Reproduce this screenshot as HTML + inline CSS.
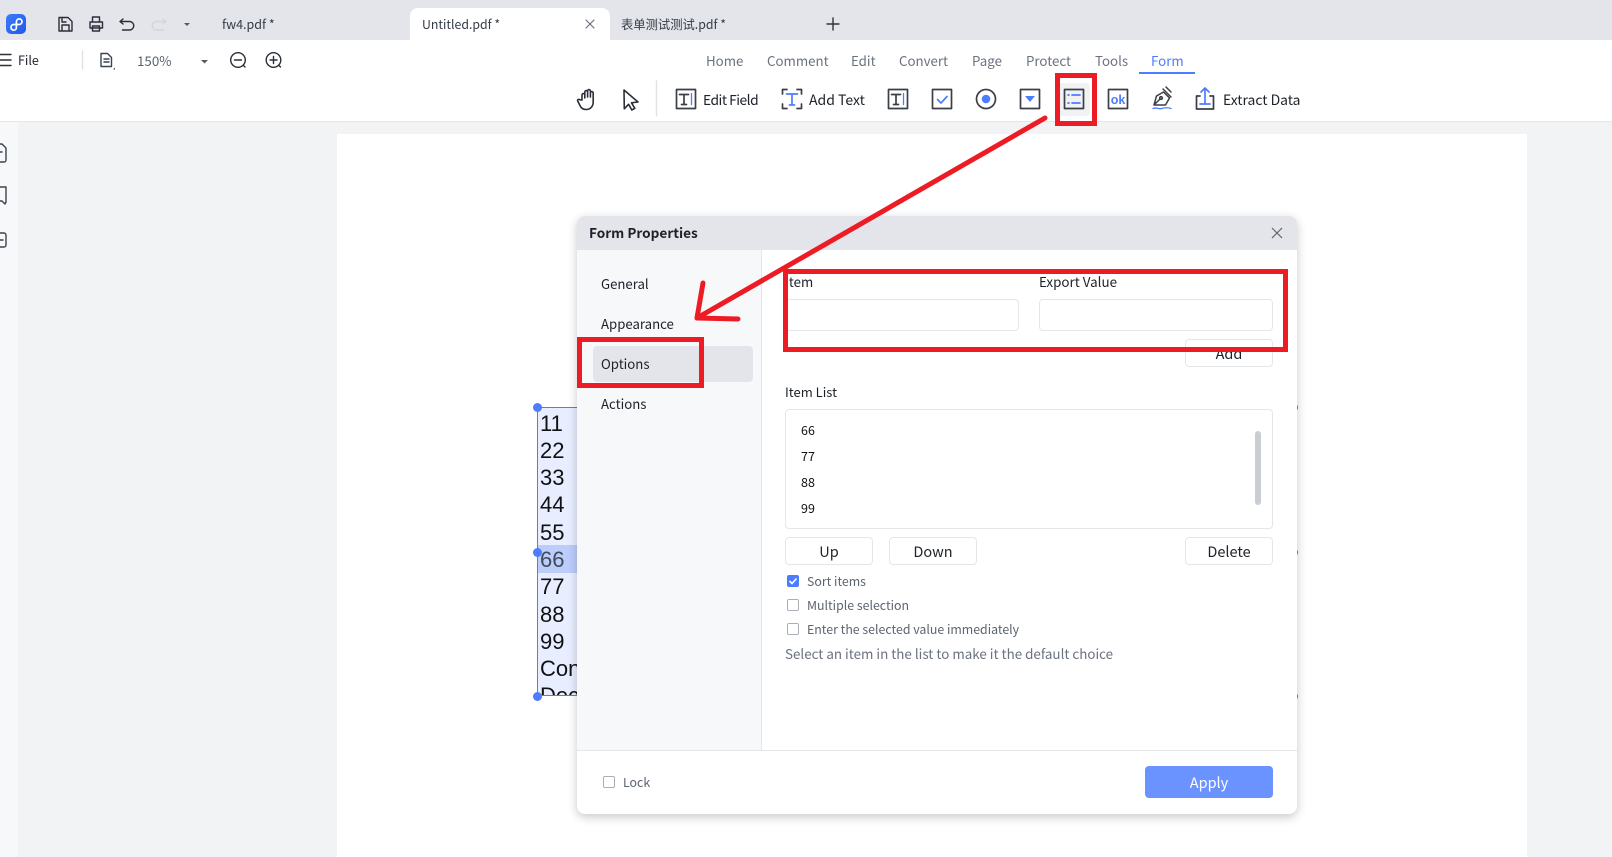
<!DOCTYPE html>
<html><head><meta charset="utf-8"><style>
html,body{margin:0;padding:0}
body{width:1612px;height:857px;position:relative;overflow:hidden;background:#f2f3f5;font-family:"Noto Sans CJK SC","Liberation Sans",sans-serif;color:#1d2129;font-size:13.2px}
.a{position:absolute}
.t{position:absolute;white-space:nowrap;line-height:20px;height:20px}
.n{color:#6b7280;font-size:13.300px;top:51px}
.b{position:absolute;box-sizing:border-box;background:#fff;border:1px solid #e5e6eb;border-radius:4px}
.btn{text-align:center;line-height:28px;font-size:14.500px}
.cb{position:absolute;left:787px;width:12px;height:12px;box-sizing:border-box;border:1px solid #a9aeb8;border-radius:2px;background:#fff}
.lb{color:#5c6470;font-size:12.350px}
.it{left:801px;font-size:12.500px;color:#111}
.w{position:absolute;font:22px/27.300px "Liberation Sans",sans-serif;color:#111;white-space:pre}
svg{position:absolute;left:0;top:0}
.r{position:absolute;box-sizing:border-box;border:5px solid #ed1c24}
.h{position:absolute;width:9px;height:9px;border-radius:50%;background:#4d7cfe}
</style></head><body>
<div class="a" style="left:0;top:0;width:1612px;height:40px;background:#e4e5ea"></div>
<div class="a" style="left:0;top:40px;width:1612px;height:81px;background:#fff"></div>
<div class="a" style="left:0;top:121px;width:1612px;height:1px;background:#e5e6eb"></div>
<div class="a" style="left:0;top:122px;width:18px;height:735px;background:#f7f8fa"></div>
<div class="a" style="left:410px;top:8px;width:200px;height:32px;background:#fff;border-radius:8px 8px 0 0"></div>
<div class="a" style="left:337px;top:134px;width:1190px;height:723px;background:#fff"></div>
<div class="a" style="left:1058px;top:83px;width:32px;height:33px;background:#f1f2f4;border-radius:4px"></div>

<div class="t" style="left:222px;top:14px;font-size:12.500px;color:#333b47">fw4.pdf *</div>
<div class="t" style="left:422px;top:14px;font-size:12.300px;color:#333b47">Untitled.pdf *</div>
<div class="t" style="left:621px;top:14px;font-size:12.300px;color:#333b47">表单测试测试.pdf *</div>
<div class="t" style="left:18px;top:50px;font-size:12.500px">File</div>
<div class="t" style="left:137px;top:50px;font-size:13.400px;color:#5c6470">150%</div>
<div class="t n" style="left:706px">Home</div>
<div class="t n" style="left:767px">Comment</div>
<div class="t n" style="left:851px">Edit</div>
<div class="t n" style="left:899px">Convert</div>
<div class="t n" style="left:972px">Page</div>
<div class="t n" style="left:1026px">Protect</div>
<div class="t n" style="left:1095px">Tools</div>
<div class="t n" style="left:1151px;color:#4d7cfe">Form</div>
<div class="a" style="left:1139px;top:72px;width:56px;height:2px;background:#4d7cfe"></div>
<div class="t" style="left:703px;top:89px;font-size:13.800px;letter-spacing:-.5px">Edit Field</div>
<div class="t" style="left:809px;top:90px;font-size:14px">Add Text</div>
<div class="t" style="left:1223px;top:90px;font-size:13.900px">Extract Data</div>

<svg width="1612" height="857" viewBox="0 0 1612 857" fill="none" stroke="#2a2f38" stroke-width="1.400" stroke-linecap="round" stroke-linejoin="round">
<defs><linearGradient id="g" x1="0" y1="0" x2="1" y2="1"><stop offset="0" stop-color="#3d7bff"/><stop offset="1" stop-color="#1f58e8"/></linearGradient></defs>
<rect x="6" y="14" width="20" height="20" rx="5" fill="url(#g)" stroke="none"/>
<path d="M11 27.500a2.700 2.700 0 1 0 5.400 0v-6a2.800 2.800 0 1 1 2.800 3h-5.400a2.700 2.700 0 0 0-2.800 3z" stroke="#fff" stroke-width="1.700"/>
<path d="M59 17.500h9l4 4V31H59zM62 31v-6h7v6M62 18v4h4"/>
<path d="M92.500 22v-5h7v5M90 22h12.500v6H90zM92.500 26h7v5h-7z"/>
<path d="M120.500 21.500h9a4.200 4.200 0 0 1 0 8.500h-7M123 19l-3 2.500 3 2.500"/>
<path d="M165.500 21.500h-9a4.200 4.200 0 0 0 0 8.500h7M163 19l3 2.500-3 2.500" stroke="#d3d5da"/>
<path d="M184 23h6l-3 3z" fill="#555b66" stroke="none"/>
<path d="M0 54.500h11M0 60h11M0 65.500h11"/>
<path d="M82.500 51v18" stroke="#e0e2e6"/>
<path d="M101 53.500h6.500l4 4v9h-10.500zM104 59h5M104 62h5" stroke="#3b4350"/>
<path d="M113 69.500l2-2v2z" fill="#444" stroke="none"/>
<path d="M201 60h7l-3.500 3.500z" fill="#555b66" stroke="none"/>
<circle cx="238" cy="60" r="7.300"/><path d="M234.500 60h7M243.500 65.500l1.500 1.500"/>
<circle cx="273.500" cy="60" r="7.300"/><path d="M270 60h7M273.500 56.500v7M279 65.500l1.500 1.500"/>
<g transform="translate(1,0)"><path d="M581 100v-5a1.400 1.400 0 0 1 2.800 0v3-6a1.400 1.400 0 0 1 2.800 0v5-6a1.400 1.400 0 0 1 2.800 0v6-4a1.400 1.400 0 0 1 2.800 0v9c0 4-2.500 7.500-7 7.500-3 0-5-1.500-6-3.500l-2.500-5c-.6-1.300 1.300-2.300 2.200-1.200z" stroke-width="1.600"/></g>
<path d="M624 90l14 12-6.500.8 3.300 5.500-3 1.700-3.200-5.700-4.300 4.500z" stroke-width="1.600"/>
<path d="M656.500 81v35" stroke="#e0e2e6"/>
<g stroke-width="1.700">
<rect x="676.500" y="89.500" width="19" height="19" stroke="#3b3f46"/>
<path d="M679.500 94.500h9M684 94.500v10M681.500 104.500h5" stroke="#3b3f46"/><path d="M691.500 93.500v11" stroke="#4d7cfe" stroke-width="1.300"/>
<path d="M782.500 94v-4.500h4.500M797 89.500h4.500v4.500M801.500 104v4.500H797M787 108.500h-4.500V104" stroke="#3b3f46"/>
<path d="M786.500 94h11M792 94v11M789.500 105h5" stroke="#4d7cfe"/>
<rect x="888.500" y="89.500" width="19" height="19" stroke="#3b3f46"/>
<path d="M891.500 94.500h9M896 94.500v10M893.500 104.500h5" stroke="#3b3f46"/><path d="M903.500 93.500v11" stroke="#4d7cfe" stroke-width="1.300"/>
<rect x="932.500" y="89.500" width="19" height="19" stroke="#3b3f46"/>
<path d="M937.500 99.500l3.500 3.500 6-6.500" stroke="#4d7cfe"/>
<circle cx="986" cy="99" r="9.500" stroke="#3b3f46"/><circle cx="986" cy="99" r="4.300" fill="#4d7cfe" stroke="none"/>
<rect x="1020.500" y="89.500" width="19" height="19" stroke="#3b3f46"/>
<path d="M1025 96h10l-5 6z" fill="#4d7cfe" stroke="none"/>
<rect x="1064.500" y="89.500" width="19" height="19" stroke="#3b3f46"/>
<path d="M1068 95h1M1068 103h1M1072 95h8M1072 103h8" stroke="#4d7cfe"/>
<rect x="1108.500" y="89.500" width="19" height="19" stroke="#3b3f46"/>
<path d="M1154 105l2.500-9 7-4 6 6-4 7zM1154 105l6-6M1163 89l8 8M1166 87l5 5" stroke="#3b3f46" stroke-width="1.500"/>
<circle cx="1161" cy="98" r="1.300" stroke="#3b3f46"/>
<path d="M1153 108.500c3-1.500 6 1 9 0s6-1 9 0" stroke="#4d7cfe" stroke-width="1.300"/>
<path d="M1200 96h-3.500v13h17V96H1210" stroke="#3b3f46"/>
<path d="M1205 103V88M1201 92l4-4 4 4M1200 104h10" stroke="#4d7cfe"/>
</g>
<text x="1110.800" y="104" font-family="Liberation Sans,sans-serif" font-size="12.500" font-weight="700" fill="#4d7cfe" stroke="none">ok</text>
<path d="M586 20l8 8M594 20l-8 8" stroke="#6b7280" stroke-width="1.200"/>
<path d="M833 18v12M827 24h12" stroke="#333" stroke-width="1.400"/>
<path d="M0 144h2l4 4v12a2 2 0 0 1-2 2H0M0 152h2" stroke="#3b4350"/>
<path d="M0 187h6v15l-1 2-3-3H0" stroke="#3b4350"/>
<path d="M0 233h4a2 2 0 0 1 2 2v10a2 2 0 0 1-2 2H0M0 240h3" stroke="#3b4350"/>
</svg>

<!-- list widget -->
<div class="a" style="left:537px;top:407px;width:758px;height:289px;box-sizing:border-box;border:1px solid #4d7cfe;background:#e8eeff;overflow:hidden"></div>
<div class="a" style="left:538px;top:545px;width:756px;height:28px;background:#bccdfb"></div>
<div class="a" style="left:538px;top:408px;width:756px;height:287px;overflow:hidden">
<div class="w" style="left:2px;top:1.500px">11
22
33
44
55
<span style="color:#3f4a5a">66</span>
77
88
99
Con
Deci</div></div>
<div class="h" style="left:533px;top:403px"></div>
<div class="h" style="left:533px;top:548px"></div>
<div class="h" style="left:533px;top:692px"></div>
<div class="h" style="left:1289px;top:403px"></div>
<div class="h" style="left:1289px;top:548px"></div>
<div class="h" style="left:1289px;top:692px"></div>

<!-- dialog -->
<div class="a" style="left:577px;top:216px;width:720px;height:598px;background:#fff;border-radius:8px;box-shadow:0 3px 10px rgba(0,0,0,.22);overflow:hidden">
<div class="a" style="left:0;top:0;width:720px;height:34px;background:#e4e5ea"></div>
<div class="a" style="left:0;top:34px;width:184px;height:500px;background:#f7f8fa;border-right:1px solid #e5e6eb"></div>
<div class="a" style="left:0;top:534px;width:720px;height:1px;background:#e5e6eb"></div>
<div class="a" style="left:16px;top:130px;width:160px;height:36px;background:#e4e5ea;border-radius:4px"></div>
</div>
<div class="t" style="left:589px;top:222px;font-size:13.600px;font-weight:700">Form Properties</div>
<svg width="1612" height="857" fill="none" stroke="#5c6470" stroke-width="1.200"><path d="M1272 228l10 10M1282 228l-10 10"/></svg>
<div class="t" style="left:601px;top:274px">General</div>
<div class="t" style="left:601px;top:314px">Appearance</div>
<div class="t" style="left:601px;top:354px">Options</div>
<div class="t" style="left:601px;top:394px">Actions</div>

<div class="t" style="left:785px;top:272px">Item</div>
<div class="t" style="left:1039px;top:271px;font-size:13.400px">Export Value</div>
<div class="b" style="left:785px;top:299px;width:234px;height:32px"></div>
<div class="b" style="left:1039px;top:299px;width:234px;height:32px"></div>
<div class="b btn" style="left:1185px;top:339px;width:88px;height:28px">Add</div>
<div class="t" style="left:785px;top:382px;font-size:13px">Item List</div>
<div class="b" style="left:785px;top:409px;width:488px;height:120px"></div>
<div class="t it" style="top:420px">66</div>
<div class="t it" style="top:446px">77</div>
<div class="t it" style="top:472px">88</div>
<div class="t it" style="top:498px">99</div>
<div class="a" style="left:1255px;top:431px;width:6px;height:74px;background:#c9cdd4;border-radius:3px"></div>
<div class="b btn" style="left:785px;top:537px;width:88px;height:28px">Up</div>
<div class="b btn" style="left:889px;top:537px;width:88px;height:28px">Down</div>
<div class="b btn" style="left:1185px;top:537px;width:88px;height:28px">Delete</div>
<div class="cb" style="top:575px;background:#4d7cfe;border-color:#4d7cfe"></div>
<svg width="1612" height="857" fill="none" stroke="#fff" stroke-width="1.600"><path d="M789.500 581l2.500 2.500 4.500-5"/></svg>
<div class="cb" style="top:599px"></div>
<div class="cb" style="top:623px"></div>
<div class="t lb" style="left:807px;top:571px">Sort items</div>
<div class="t lb" style="left:807px;top:595px">Multiple selection</div>
<div class="t lb" style="left:807px;top:619px">Enter the selected value immediately</div>
<div class="t" style="left:785px;top:643px;color:#6b7280;font-size:13.400px">Select an item in the list to make it the default choice</div>
<div class="cb" style="left:603px;top:776px"></div>
<div class="t lb" style="left:623px;top:772px">Lock</div>
<div class="a" style="left:1145px;top:766px;width:128px;height:32px;background:#6a93ff;border-radius:4px;color:#fff;text-align:center;line-height:33px;font-size:14.500px">Apply</div>

<!-- annotations -->
<div class="r" style="left:1055px;top:73px;width:42px;height:53px"></div>
<div class="r" style="left:577px;top:337px;width:127px;height:51px"></div>
<div class="r" style="left:783px;top:269px;width:505px;height:83px"></div>
<svg width="1612" height="857" fill="none" stroke="#ed1c24" stroke-linecap="round" stroke-linejoin="round" stroke-width="5">
<path d="M1045 118L697 318"/><path d="M703 283L697 318L738 319"/>
</svg>
</body></html>
